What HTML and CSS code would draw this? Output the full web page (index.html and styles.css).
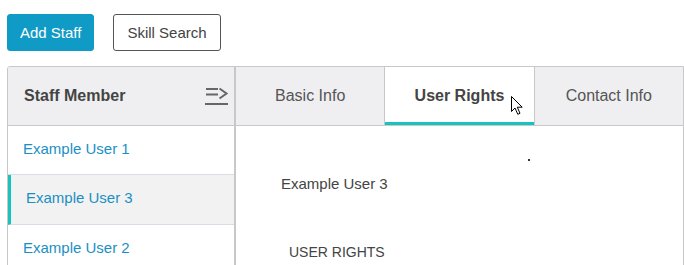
FILE: index.html
```html
<!DOCTYPE html>
<html>
  <head>
    <title>Staff</title>
    <link rel="stylesheet" href="styles.css">
  </head>
  <body>
    <div class="page">
      <div class="toolbar">
        <button class="btn btn-primary">Add Staff</button>
        <button class="btn btn-outline">Skill Search</button>
      </div>

      <div class="panel">
        <div class="staff-head">
          <span>Staff Member</span>
          <svg class="collapse-icon" width="24" height="20" viewBox="0 0 24 20">
            <path d="M1 3 H13 M1 8.5 H13 M0 18 H23" stroke="#666" stroke-width="2" fill="none" />
            <path d="M14.5 2.5 L21.5 7.5 L14.5 12.5" stroke="#666" stroke-width="2" fill="none" />
          </svg>
        </div>

        <div class="tabs">
          <div class="tab">Basic Info</div>
          <div class="tab tab-active">
            User Rights
            <!-- mouse pointer from the screenshot -->
            <svg class="pointer" width="14" height="20" viewBox="0 0 14 20">
              <path d="M0.5 0.5 L0.5 15.5 L4 12 L6.8 18.3 L9 17.3 L6.3 11.2 L11.2 11.2 Z" fill="#fff" stroke="#000" stroke-width="1" />
            </svg>
          </div>
          <div class="tab">Contact Info</div>
        </div>

        <ul class="staff-list">
          <li class="staff-item">Example User 1</li>
          <li class="staff-item staff-item-selected">Example User 3</li>
          <li class="staff-item">Example User 2</li>
        </ul>

        <div class="tab-body">
          <span class="dot"></span>
          <div class="member-name">Example User 3</div>
          <div class="section-title">USER RIGHTS</div>
        </div>
      </div>
    </div>
  </body>
</html>
```

FILE: styles.css
```css
* {
  box-sizing: border-box;
}

body {
  margin: 0;
  font-family: "Liberation Sans", Arial, sans-serif;
  color: #444;
  background-color: #fff;
}

.page {
  padding: 14px 0 0 7px;
}

.toolbar {
  display: flex;
  gap: 19px;
}

.btn {
  height: 37px;
  font-family: inherit;
  font-size: 15px;
  border-radius: 3px;
  cursor: pointer;
}

.btn-primary {
  padding: 0 12px;
  background-color: #0f9bc6;
  border: 1px solid #0f9bc6;
  color: #fff;
}

.btn-outline {
  padding: 0 13px;
  background-color: #fff;
  border: 1px solid #555;
  color: #444;
}

.panel {
  margin-top: 15px;
  width: 677px;
  height: 200px;
  display: grid;
  grid-template-columns: 228px 1fr;
  grid-template-rows: 59px 1fr;
  border: 1px solid #c8c8c8;
  border-radius: 3px 0 0 0;
}

.staff-head {
  display: flex;
  align-items: center;
  justify-content: space-between;
  padding: 0 5px 0 16px;
  background-color: #efeff1;
  border-bottom: 1px solid #c8c8c8;
  border-right: 2px solid #c8c8c8;
  border-radius: 3px 0 0 0;
  font-size: 16px;
  font-weight: bold;
  color: #444;
}

.tabs {
  display: flex;
  border-bottom: 1px solid #c8c8c8;
}

.tab {
  flex: 1;
  display: flex;
  align-items: center;
  justify-content: center;
  background-color: #efeff1;
  border-right: 1px solid #c8c8c8;
  font-size: 16px;
  color: #555;
}

.tab:last-child {
  border-right: none;
}

.tab-active {
  position: relative;
  background-color: #fff;
  font-weight: bold;
  color: #444;
  box-shadow: inset 0 -3px 0 #17c3c0;
}

.pointer {
  position: absolute;
  left: 126px;
  top: 29px;
}

.staff-list {
  list-style: none;
  margin: 0;
  padding: 0;
  border-right: 2px solid #c8c8c8;
}

.staff-item {
  height: 50px;
  padding: 14px 0 0 15px;
  border-bottom: 1px solid #dcdce6;
  font-size: 15px;
  line-height: 17px;
  color: #1b8fc4;
}

.staff-item:first-child {
  height: 49px;
}

.staff-item-selected {
  background-color: #f2f2f2;
  border-left: 3px solid #17c3c0;
}

.tab-body {
  position: relative;
  padding: 49px 0 0 45px;
}

.dot {
  position: absolute;
  left: 292px;
  top: 33px;
  width: 2px;
  height: 2px;
  background-color: #333;
}

.member-name {
  font-size: 15px;
  line-height: 17px;
  color: #444;
}

.section-title {
  margin-top: 52px;
  padding-left: 8px;
  font-size: 14px;
  line-height: 16px;
  color: #444;
}
```
